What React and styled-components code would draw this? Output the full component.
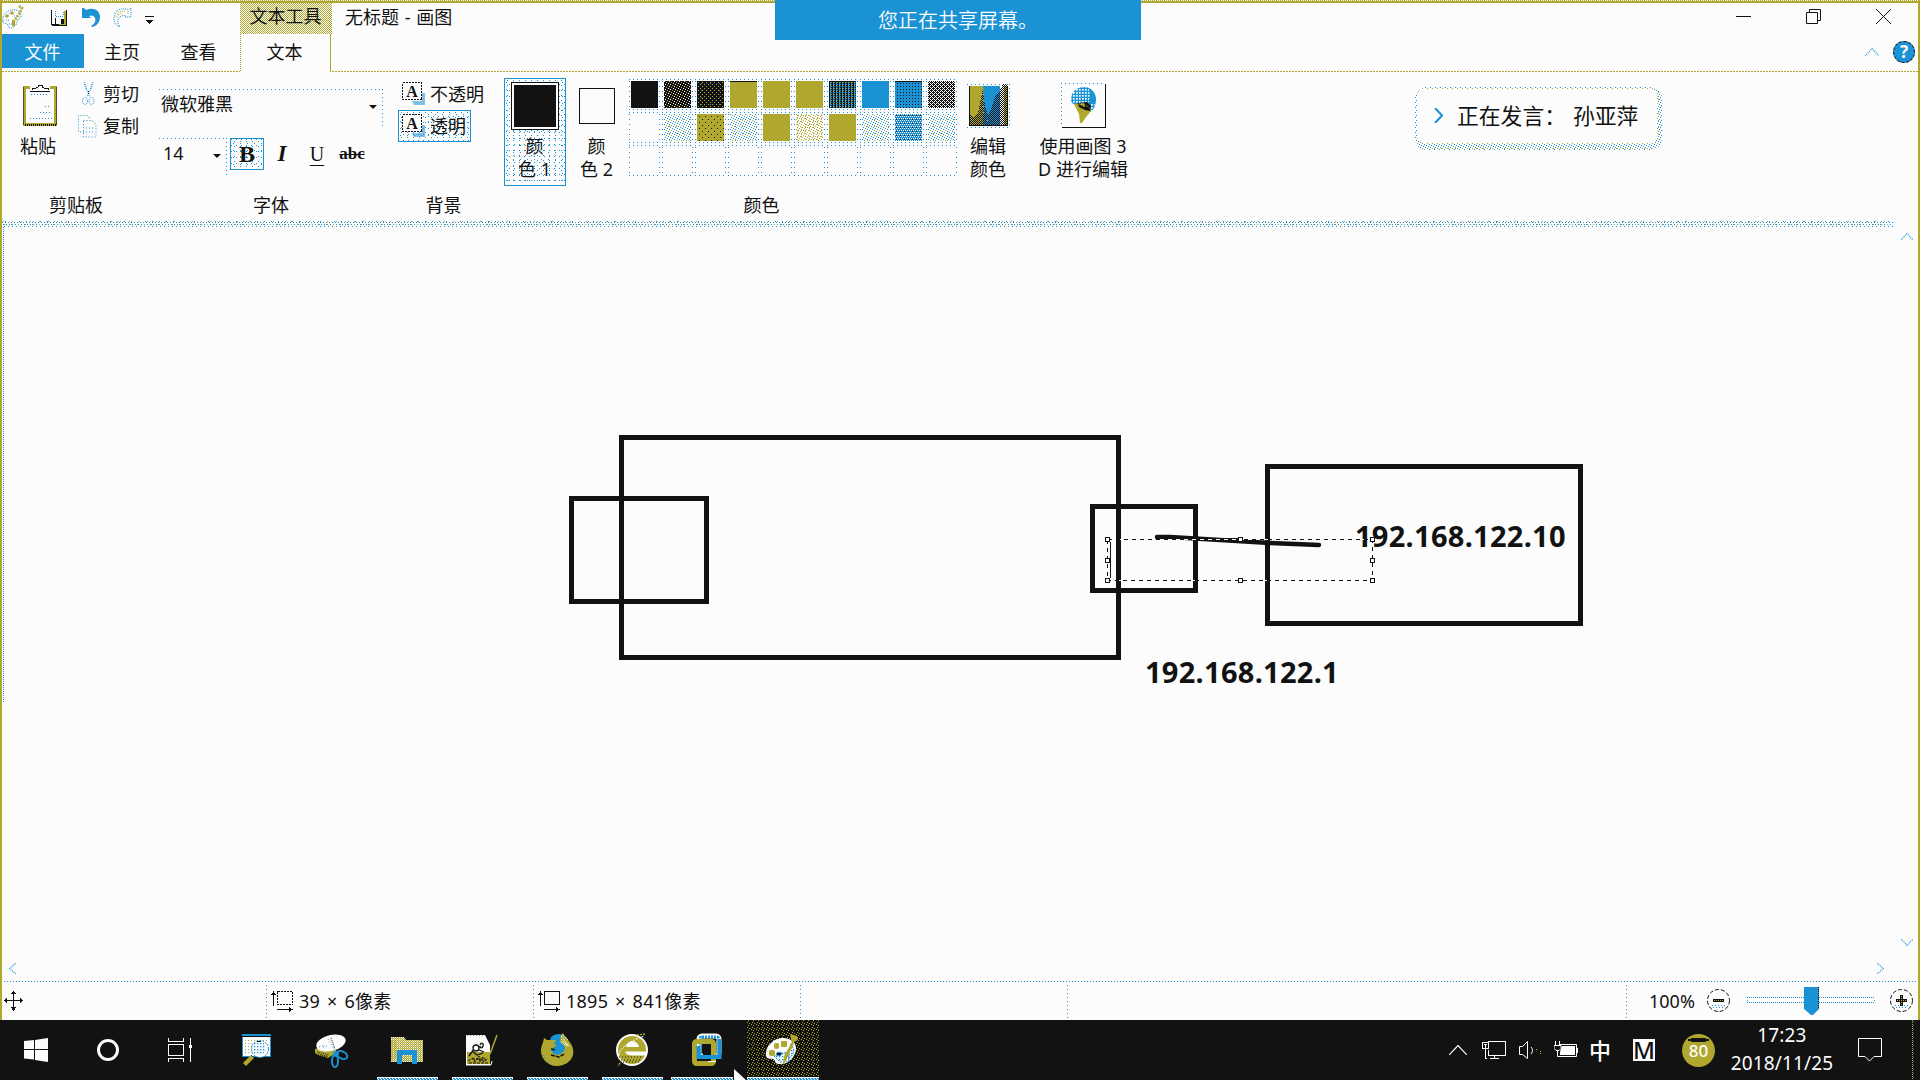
import React from "react";
import styled, { createGlobalStyle, css } from "styled-components";

const INK = "#121212";
const PAPER = "#fcfcfc";
const OLIVE = "#b0a82e";
const BLUE = "#1a92d4";

/* one pixel of colour repeated on a w by h grid */
const dot = (c, x, y, w, h = w) =>
  `conic-gradient(from 270deg at 1px 1px, ${c} 90deg, transparent 0) ${x}px ${y}px / ${w}px ${h}px`;
const checker = (c) => `conic-gradient(${c} 25%, transparent 0 50%, ${c} 0 75%, transparent 0) 0 0 / 2px 2px`;

const mesh = {
  paleBlue: `${dot(BLUE, 0, 0, 5, 6)}, ${dot(BLUE, 3, 2, 6, 5)}, ${dot(BLUE, 2, 4, 7, 7)}`,
  paleMix: `${dot(BLUE, 0, 0, 5, 5)}, ${dot(OLIVE, 2, 1, 5, 5)}, ${dot(BLUE, 4, 2, 5, 5)}, ${dot(BLUE, 1, 3, 5, 5)}, ${dot(BLUE, 3, 4, 5, 5)}, ${dot(OLIVE, 5, 5, 7, 7)}`,
  band: `${dot(BLUE, 0, 1, 3, 6)}, ${dot(OLIVE, 2, 3, 7, 6)}, ${dot(BLUE, 1, 3, 3, 6)}, ${dot(BLUE, 2, 5, 4, 6)}, ${dot(OLIVE, 1, 0, 9, 6)}, ${dot(BLUE, 3, 0, 7, 6)}`,
};

const fills = {
  black: INK,
  gray: `${dot(PAPER, 0, 0, 5, 5)}, ${dot(OLIVE, 2, 1, 5, 5)}, ${dot(PAPER, 4, 2, 5, 5)}, ${dot(PAPER, 1, 3, 5, 5)}, ${dot(OLIVE, 3, 4, 5, 5)}, ${INK}`,
  maroon: `${dot(OLIVE, 1, 1, 4, 4)}, ${dot(OLIVE, 3, 3, 4, 4)}, ${dot(BLUE, 4, 2, 9, 7)}, ${INK}`,
  red: OLIVE,
  orange: OLIVE,
  yellow: OLIVE,
  green: `repeating-linear-gradient(90deg, ${INK} 0 1px, transparent 1px 3px), ${dot(INK, 2, 0, 3, 2)}, ${dot(OLIVE, 1, 1, 3, 3)}, ${BLUE}`,
  cyan: BLUE,
  indigo: `${dot(INK, 2, 2, 3, 3)}, ${BLUE}`,
  purple: `${dot(PAPER, 0, 0, 4, 4)}, ${dot(PAPER, 2, 0, 4, 4)}, ${dot(PAPER, 1, 1, 4, 4)}, ${dot(PAPER, 2, 2, 4, 4)}, ${dot(PAPER, 0, 2, 4, 4)}, ${dot(PAPER, 3, 3, 4, 4)}, ${INK}`,
  white: PAPER,
  pale: `${mesh.paleMix}, ${PAPER}`,
  brown: `${dot(INK, 2, 2, 6, 6)}, ${dot(INK, 5, 5, 6, 6)}, ${OLIVE}`,
  cream: `${dot(OLIVE, 0, 0, 5, 5)}, ${dot(OLIVE, 2, 1, 5, 5)}, ${dot(OLIVE, 4, 2, 5, 5)}, ${dot(OLIVE, 1, 3, 5, 5)}, ${dot(OLIVE, 3, 4, 5, 5)}, ${dot(OLIVE, 1, 1, 4, 3)}, ${PAPER}`,
  slate: `${dot(PAPER, 0, 0, 2, 4)}, ${dot(PAPER, 1, 2, 2, 4)}, ${dot(INK, 1, 1, 4, 4)}, ${BLUE}`,
};

const Global = createGlobalStyle`
  html, body { margin: 0; padding: 0; }
  body { width: 1920px; height: 1080px; overflow: hidden; background: ${INK}; }
  * { box-sizing: border-box; }
  svg { display: block; flex: none; }
`;

const Desktop = styled.div`
  position: relative;
  width: 1920px;
  height: 1080px;
  display: flex;
  flex-direction: column;
  overflow: hidden;
  color: ${INK};
  font: 400 18px/24px "Noto Sans", "Noto Sans CJK SC", sans-serif;
  white-space: nowrap;
`;

const Window = styled.div`
  height: 1020px;
  display: flex;
  flex-direction: column;
  background: ${PAPER};
  border-left: 2px solid ${OLIVE};
  border-right: 2px solid ${OLIVE};
`;

const TopEdge = styled.div`
  height: 3px;
  margin: 0 -2px;
  background: repeating-linear-gradient(90deg, ${OLIVE} 0 1px, transparent 1px 2px) 0 0 / 100% 1px no-repeat,
    linear-gradient(${OLIVE}, ${OLIVE}) 0 1px / 100% 2px no-repeat;
`;

const TitleBar = styled.div`
  height: 31px;
  display: flex;
`;
const QuickAccess = styled.div`
  width: 238px;
  display: flex;
  align-items: flex-start;
`;
const Slot = styled.div`
  margin: ${(p) => p.$m || 0};
  flex: none;
`;
const ContextTitle = styled.div`
  width: 92px;
  height: 32px;
  padding-right: 1px;
  text-align: center;
  line-height: 26px;
  background: ${checker(OLIVE)};
`;
const Title = styled.div`
  flex: 1;
  padding: 2px 0 0 13px;
  word-spacing: 1px;
`;
const WindowButtons = styled.div`
  display: flex;
  padding: 6px 27px 0 0;
  gap: 55px;
`;

const TabRow = styled.div`
  height: 38px;
  display: flex;
  background: repeating-linear-gradient(90deg, ${OLIVE} 0 2px, transparent 2px 3px) 0 37px / 100% 1px no-repeat;
`;
const Tab = styled.div`
  height: 34px;
  line-height: 36px;
  text-align: center;
  width: ${(p) => p.$w}px;
  ${(p) => p.$file && css`background: ${BLUE}; color: ${PAPER}; padding-right: 1px;`}
  ${(p) =>
    p.$active &&
    css`
      height: 38px;
      margin-left: 3px;
      padding-right: 2px;
      background: repeating-linear-gradient(${OLIVE} 0 1px, transparent 1px 2px) 0 0 / 1px 100% no-repeat,
        linear-gradient(${OLIVE}, ${OLIVE}) 90px 0 / 1px 100% no-repeat, ${PAPER};
    `}
`;
const TabTools = styled.div`
  margin-left: auto;
  padding: 7px 3px 0 0;
  display: flex;
  gap: 14px;
`;
const Help = styled.div`
  width: 22px;
  height: 22px;
  border-radius: 50%;
  border: 1px dashed ${INK};
  background: ${BLUE};
  color: ${PAPER};
  font: bold 17px/20px "Noto Sans", sans-serif;
  text-align: center;
`;

const Ribbon = styled.div`
  height: 149px;
  display: flex;
`;
const Group = styled.div`
  width: ${(p) => p.$w}px;
  margin-left: ${(p) => p.$gap || 0}px;
  display: flex;
  flex-direction: column;
`;
const GroupBody = styled.div`
  height: 121px;
  display: flex;
  flex-direction: ${(p) => (p.$column ? "column" : "row")};
`;
const GroupLabel = styled.div`
  text-align: center;
  line-height: 24px;
`;
const Band = styled.div`
  height: 6px;
  width: 1891px;
  flex: none;
  background: ${mesh.band};
`;

const BigButton = styled.div`
  width: ${(p) => p.$w}px;
  padding-top: ${(p) => p.$top}px;
  margin-left: ${(p) => p.$gap || 0}px;
  display: flex;
  flex-direction: column;
  align-items: center;
`;
const BigText = styled.div`
  margin-top: ${(p) => p.$m}px;
  line-height: 23px;
  text-align: center;
`;
const SmallList = styled.div`
  padding: 6px 0 0 12px;
  display: flex;
  flex-direction: column;
`;
const SmallItem = styled.div`
  height: 32px;
  display: flex;
  align-items: center;
`;
const SmallIcon = styled.div`
  width: 25px;
  display: flex;
  justify-content: flex-start;
`;

const Combo = styled.div`
  width: ${(p) => p.$w}px;
  height: 38px;
  display: flex;
  justify-content: space-between;
  padding: ${(p) => p.$pt || 3}px 6px 0 ${(p) => p.$pl}px;
  background: ${dot(BLUE, 0, 0, 4, 80)}, repeating-linear-gradient(${BLUE} 0 1px, transparent 1px 4px) 100% 0 / 1px 100% no-repeat;
`;
const FontGroup = styled.div`
  padding-top: 17px;
  display: flex;
  flex-direction: column;
  gap: 11px;
`;
const FontRow = styled.div`
  display: flex;
`;
const Caret = styled.div`
  width: 0;
  height: 0;
  margin-top: ${(p) => p.$m}px;
  border: 4px solid transparent;
  border-top-color: ${INK};
  border-bottom: 0;
`;
const Style = styled.div`
  width: 34px;
  height: 32px;
  margin-left: ${(p) => p.$gap}px;
  font: ${(p) => p.$font || 'bold 24px/32px "Liberation Serif", serif'};
  text-align: center;
  text-decoration: ${(p) => p.$deco || "none"};
  text-decoration-thickness: 1px;
  text-underline-offset: 4px;
  ${(p) => p.$on && css`background: ${mesh.paleBlue}; border: 1px solid ${BLUE}; line-height: 30px;`}
`;
const Option = styled.div`
  width: 73px;
  height: 32px;
  margin-top: ${(p) => p.$m || 0}px;
  padding-left: 4px;
  display: flex;
  align-items: center;
  gap: 4px;
  ${(p) => p.$on && css`background: ${mesh.paleBlue}; box-shadow: inset 0 0 0 1px ${BLUE};`}
`;

const ColorButton = styled.div`
  width: 62px;
  height: 108px;
  margin-top: 6px;
  padding-right: 1px;
  display: flex;
  flex-direction: column;
  align-items: center;
  ${(p) => p.$on && css`background: ${mesh.paleBlue}; box-shadow: inset 0 0 0 1px ${BLUE};`}
`;
const Chip = styled.div`
  width: ${(p) => p.$s}px;
  height: ${(p) => p.$s}px;
  margin: ${(p) => p.$m};
  background: ${(p) => p.$fill};
  border: 1px solid ${INK};
  box-shadow: inset 0 0 0 2px ${PAPER};
`;
const Palette = styled.div`
  display: grid;
  grid-template-columns: repeat(10, 31px);
  grid-auto-rows: 31px;
  gap: 2px;
  margin: 7px 0 0 12px;
  height: 97px;
`;
const Swatch = styled.div`
  padding: 2px;
  background: ${dot(BLUE, 0, 0, 4, 30)}, ${dot(BLUE, 0, 2, 30, 5)};
  &::before {
    content: "";
    display: block;
    width: 27px;
    height: 27px;
    background: ${(p) => p.$fill || "none"};
    ${(p) => p.$dark && css`box-shadow: inset 0 1px ${INK};`}
  }
`;

const Workspace = styled.div`
  flex: 1;
  display: flex;
  flex-direction: column;
`;
const CanvasRow = styled.div`
  flex: 1;
  display: flex;
`;
const Canvas = styled.div`
  position: relative;
  flex: 1;
  background: repeating-linear-gradient(${BLUE} 0 1px, transparent 1px 2px) 1px 0 / 1px 476px no-repeat;
`;
const VScroll = styled.div`
  width: 22px;
  display: flex;
  flex-direction: column;
  justify-content: space-between;
  padding: 6px 0 6px 5px;
`;
const HScroll = styled.div`
  height: 29px;
  display: flex;
  justify-content: space-between;
  padding: 11px 34px 0 7px;
`;

/* shapes on the drawing canvas, in canvas coordinates */
const Box = styled.div`
  position: absolute;
  left: ${(p) => p.$x}px;
  top: ${(p) => p.$y}px;
  width: ${(p) => p.$w}px;
  height: ${(p) => p.$h}px;
  border: 5px solid ${INK};
`;
const Address = styled.div`
  position: absolute;
  left: ${(p) => p.$x}px;
  top: ${(p) => p.$y}px;
  font: bold 29px/40px "Noto Sans", sans-serif;
  letter-spacing: 0.28px;
`;
const Overlay = styled.svg`
  position: absolute;
  left: 0;
  top: 0;
`;

const StatusBar = styled.div`
  height: 39px;
  display: flex;
  align-items: center;
  background: repeating-linear-gradient(90deg, ${BLUE} 0 1px, transparent 1px 3px) 2px 0 / 100% 1px no-repeat;
`;
const StatusCell = styled.div`
  width: ${(p) => p.$w}px;
  height: 35px;
  margin-top: 4px;
  padding: 0 0 3px ${(p) => p.$pl || 4}px;
  display: flex;
  align-items: center;
  gap: 5px;
  word-spacing: 2px;
  letter-spacing: 0.25px;
  background: repeating-linear-gradient(${BLUE} 0 1px, transparent 1px 4px) 100% 0 / 1px 100% no-repeat;
`;
const Zoom = styled.div`
  flex: 1;
  display: flex;
  align-items: center;
  padding-left: 22px;
`;
const ZoomText = styled.div`
  width: 58px;
`;
const Track = styled.div`
  width: 128px;
  height: 28px;
  margin: 0 15px 0 17px;
  padding-left: 57px;
  background: repeating-linear-gradient(90deg, ${BLUE} 0 1px, transparent 1px 2px) 0 10px / 100% 1px no-repeat,
    repeating-linear-gradient(90deg, ${BLUE} 0 1px, transparent 1px 2px) 0 15px / 100% 1px no-repeat,
    linear-gradient(${BLUE}, ${BLUE}) 0 13px / 1px 1px no-repeat,
    linear-gradient(${BLUE}, ${BLUE}) 127px 13px / 1px 1px no-repeat;
`;

const Taskbar = styled.div`
  height: 60px;
  display: flex;
  background: ${INK};
  color: ${PAPER};
`;
const Task = styled.div`
  width: ${(p) => p.$w}px;
  margin-left: ${(p) => p.$gap || 0}px;
  padding-top: ${(p) => p.$top ?? 13}px;
  padding-left: ${(p) => p.$right || 0}px;
  padding-right: ${(p) => p.$left || 0}px;
  display: flex;
  justify-content: center;
  ${(p) =>
    p.$open &&
    css`
      background: ${dot(PAPER, 0, 58, 3, 60)}, ${dot(PAPER, 1, 59, 3, 60)},
        linear-gradient(${PAPER}, ${PAPER}) 0 57px / 100% 1px no-repeat,
        linear-gradient(${BLUE}, ${BLUE}) 0 58px / 100% 2px no-repeat
        ${p.$active
          ? `, ${dot(OLIVE, 0, 2, 5, 5)}, ${dot(OLIVE, 2, 3, 5, 5)}, ${dot(OLIVE, 4, 4, 5, 5)}, ${dot(OLIVE, 1, 5, 5, 5)}`
          : ""};
    `}
`;
const Tray = styled.div`
  margin-left: auto;
  width: 471px;
  display: flex;
  align-items: flex-start;
`;
const Ime = styled.div`
  width: 20px;
  margin: 17px 0 0 11px;
  font: 500 22px/24px "Noto Sans CJK SC", sans-serif;
  text-align: center;
`;
const Mode = styled.div`
  width: 22px;
  height: 22px;
  margin: 19px 0 0 24px;
  background: ${PAPER};
  color: ${INK};
  font: 500 24px/22px "Noto Sans", sans-serif;
  display: flex;
  justify-content: center;
`;
const Score = styled.div`
  width: 33px;
  height: 33px;
  margin: 14px 0 0 27px;
  border-radius: 50%;
  background: radial-gradient(ellipse 11px 2px at 50% 6px, ${INK} 98%, transparent), ${OLIVE};
  font: 500 17px/34px "Noto Sans", sans-serif;
  text-align: center;
`;
const Clock = styled.div`
  width: 118px;
  margin: 1px 0 0 8px;
  text-align: center;
  line-height: 28px;
  font-size: 19px;
  letter-spacing: 0.15px;
`;
const ShowDesktop = styled.div`
  width: 2px;
  height: 60px;
  margin-left: 30px;
  background: ${dot(OLIVE, 0, 0, 2, 4)}, ${dot(OLIVE, 0, 2, 2, 4)}, ${dot(BLUE, 1, 1, 2, 4)};
`;

const ShareBar = styled.div`
  position: absolute;
  left: 775px;
  top: 0;
  width: 366px;
  height: 40px;
  background: ${BLUE};
  color: ${PAPER};
  font: 350 20px/39px "Noto Sans CJK SC", sans-serif;
  text-align: center;
`;
const Speaking = styled.div`
  position: absolute;
  left: 1415px;
  top: 87px;
  width: 247px;
  height: 63px;
  padding: 2px 5px 7px 2px;
  border-radius: 12px;
  background: ${mesh.paleMix};
`;
const SpeakingCard = styled.div`
  height: 54px;
  border-radius: 7px;
  background: ${PAPER};
  display: flex;
  align-items: center;
  padding: 0 0 2px 17px;
  font: 400 21.8px/30px "Noto Sans CJK SC", sans-serif;
`;
const Pointer = styled.svg`
  position: absolute;
  left: 734px;
  top: 1069px;
`;

const Chevron = ({ d = "up", w = 12, h = 7, color = BLUE, dash = "1 1" }) => {
  const pts = {
    up: `0,${h} ${w / 2},0.5 ${w},${h}`,
    down: `0,0 ${w / 2},${h - 0.5} ${w},0`,
    left: `${w},0 0.5,${h / 2} ${w},${h}`,
    right: `0,0 ${w - 0.5},${h / 2} 0,${h}`,
  };
  return (
    <svg width={w} height={h}>
      <polyline points={pts[d]} fill="none" stroke={color} strokeWidth="1.2" strokeDasharray={dash} />
    </svg>
  );
};

const AppIcon = () => (
  <svg width="22" height="24" viewBox="0 0 22 24">
    <path d="M1 16C0 10 4 6 10 5c5-1 9 2 9 6 0 3-3 3-4 5 0 4-3 7-7 7-2 0-1-3-3-4s-4 0-4-3z" fill={PAPER} stroke={BLUE} strokeDasharray="1 1" />
    <path d="M4 15h3M7 19h4M12 11h3M4 12l4-4" stroke={BLUE} strokeDasharray="1 1" />
    <path d="M17 1l3 2-2 5-6 8" fill="none" stroke={OLIVE} strokeWidth="2.500" strokeDasharray="2 1" />
    <g fill={OLIVE}>
      <circle cx="5" cy="11" r="1.800" /><circle cx="10" cy="8" r="1.800" /><rect x="10" y="15" width="3" height="6" />
    </g>
  </svg>
);
const SaveIcon = () => (
  <svg width="16" height="16" shapeRendering="crispEdges">
    <path d="M0 0h1v15h-1zM15 0h1v16h-1zM1 14h14v2H1zM4 8h1v7H4zM10 9h4v6h-4z" fill={INK} />
    <path d="M4 1v5h8v-5" fill="none" stroke={BLUE} strokeDasharray="1 1" />
    <path d="M13 1h2v14h-2zM8 14h7v1H8z" fill={OLIVE} />
  </svg>
);
const UndoIcon = () => (
  <svg width="18" height="20">
    <path d="M0 0h2l2 2c6-3 14-1 14 7 0 5-3 9-8 10l-1-1c4-2 5-5 4-8-1-3-4-3-6-2l2 2H0z" fill={BLUE} />
  </svg>
);
const RedoIcon = () => (
  <svg width="19" height="20" fill="none" stroke={BLUE} strokeDasharray="1 1">
    <path d="M18 0l-2 2C9-1 1 2 1 10c0 5 2 8 6 9-3-4-3-8 0-10 2-2 4-2 6-1l-1 1h6z" />
    <path d="M5 4l7-1M3 9l2-4M15 3v4M5 7l4-2" stroke={OLIVE} />
  </svg>
);
const PasteIcon = () => (
  <svg width="34" height="43" shapeRendering="crispEdges">
    <path d="M1.500 3.500h31v37h-31z" fill={PAPER} stroke={OLIVE} strokeWidth="3" />
    <path d="M0 3h1v38H0zM33 3h1v38h-1z" fill={INK} opacity=".6" />
    <path d="M2 41h31" stroke={INK} strokeDasharray="1 1" strokeWidth="2" />
    <path d="M7 1h20v6H7z" fill={PAPER} />
    <path d="M7 7.500h20M9 6V4h4M25 6V4h-4M15 3V1h4v2M13 4l2-1M19 3l2 1" fill="none" stroke={INK} />
    <path d="M8 10.500h18M22 22.500h6M17 28.500h12M7 34.500h22" stroke={BLUE} strokeDasharray="1 2" />
  </svg>
);
const CutIcon = () => (
  <svg width="13" height="24" fill="none" stroke={BLUE} strokeDasharray="1 1">
    <path d="M2 0l2 7 4 8M11 0L9 7l-4 8M3 2l2 6M10 2L8 8" />
    <ellipse cx="3" cy="19" rx="2.500" ry="3.500" /><ellipse cx="9.500" cy="19" rx="2.500" ry="3.500" />
    <path d="M6.500 9v4" stroke={INK} />
  </svg>
);
const CopyIcon = () => (
  <svg width="19" height="23" fill="none" stroke={BLUE} strokeDasharray="1 2">
    <path d="M6 17H.5V.5H9l3 3M5.500 5.500H14l4 4V22H5.500zM8 13h7M8 17h7" />
    <path d="M9 .5l4 4M14 5.500l4 4" stroke={OLIVE} />
  </svg>
);
const ModeIcon = () => (
  <svg width="24" height="24">
    <path d="M10 19h13v4H12zM20 11h3v10h-3z" fill={BLUE} opacity=".55" />
    <rect x=".5" y=".5" width="19" height="17" fill={PAPER} stroke={INK} strokeDasharray="2 1" shapeRendering="crispEdges" />
    <text x="10" y="15" textAnchor="middle" fontFamily="Liberation Serif, serif" fontWeight="bold" fontSize="16" fill={INK}>A</text>
  </svg>
);
const EditColors = () => (
  <svg width="43" height="44" shapeRendering="crispEdges">
    <defs>
      <pattern id="inkMesh" width="2" height="2" patternUnits="userSpaceOnUse">
        <rect width="1" height="1" fill={INK} /><rect x="1" y="1" width="1" height="1" fill={INK} />
      </pattern>
    </defs>
    <path d="M0 .5h43M42.500 0v43M0 43.500h43" stroke={BLUE} strokeDasharray="1 3" />
    <rect x="2" y="2" width="14" height="40" fill={OLIVE} />
    <rect x="16" y="2" width="17" height="40" fill={BLUE} />
    <rect x="33" y="2" width="8" height="40" fill={PAPER} />
    <rect x="37" y="2" width="3" height="40" fill={OLIVE} />
    <path d="M2 29l4 5 5-4 3-17 2-8 2 18 3 8 4-8 4-12 4-5 3-6 4 0v42H2z" fill="url(#inkMesh)" />
    <path d="M2 37l6 2 5-4 3-8 3 9 6-5 5-10 5-4 5 6v19H2z" fill="url(#inkMesh)" />
    <path d="M2.500 2v39.500H40V2" fill="none" stroke={INK} />
    <path d="M16.500 4v24l4 9" fill="none" stroke={OLIVE} strokeDasharray="1 2" />
  </svg>
);
const Paint3D = () => (
  <svg width="45" height="45">
    <defs>
      <pattern id="paperMesh" width="3" height="3" patternUnits="userSpaceOnUse"><rect width="1.700" height="1.700" fill={PAPER} /></pattern>
    </defs>
    <g shapeRendering="crispEdges" fill="none">
      <path d="M0 .5h44M.5 0v44" stroke={BLUE} strokeDasharray="1 3" />
      <path d="M44.500 1v43.500H1" stroke={INK} />
    </g>
    <path d="M10 17C10 9 16 4 23 4s12 6 12 12c0 6-2 10-5 13l-15-7c-3-1-5-2-5-5z" fill={BLUE} />
    <path d="M10 17C10 9 16 4 23 4s6 7 5 15l-13 4c-3-1-5-3-5-6z" fill="url(#paperMesh)" />
    <path d="M29 20h5c0 4-2 7-5 10z" fill="url(#paperMesh)" />
    <path d="M13 21h15l2 7-5 6-4 6-2 0-1-9z" fill={OLIVE} />
    <path d="M17 20l9-1 4 4-1 5-5-1-6-3z" fill={INK} />
    <path d="M18 21l5-1 1 4zM25 22l4 4" fill={OLIVE} stroke={OLIVE} strokeDasharray="1 1" />
  </svg>
);
const MoveIcon = () => (
  <svg width="19" height="20" shapeRendering="crispEdges">
    <path d="M0 9.500h19M9.500 0v19" stroke={INK} />
    <path d="M9.500 0l3 3h-6zM9.500 20l3-4h-6zM0 9.500l3-3v6zM19 9.500l-3-3v6z" fill={INK} />
  </svg>
);
const SizeIcon = ({ dashed }) => (
  <svg width="23" height="21" shapeRendering="crispEdges">
    <path d="M2.500 1v14M6 18.500h16" stroke={INK} />
    <path d="M2.500 0l2.500 4H0zM22 18.500L18 16v5z" fill={INK} />
    <rect x="6.500" y=".5" width="15" height="13" fill="none" stroke={INK} strokeDasharray={dashed ? "2 1" : "none"} />
  </svg>
);
const ZoomKnob = ({ plus }) => (
  <svg width="23" height="23">
    <circle cx="11.500" cy="11.500" r="11" fill="none" stroke={INK} strokeDasharray="4 2" />
    <path d="M5 16.500h13M6 18.500h11" stroke={BLUE} strokeDasharray="1 2" />
    <path d={plus ? "M6 11.500h11M11.500 6v11" : "M6 11.500h11"} stroke={INK} strokeWidth="3" />
    <path d={plus ? "M7 11.500h9M11.500 7v9" : "M7 11.500h9"} stroke={OLIVE} strokeDasharray="1 1" />
  </svg>
);

const WinLogo = () => (
  <svg width="24" height="24" fill={PAPER}>
    <path d="M0 3l10-1v9H0zM11 2l13-2v11H11zM0 12h10v9.500L0 20.500zM11 12h13v12l-13-2z" />
  </svg>
);
const Ring = () => (
  <svg width="24" height="24"><circle cx="12" cy="12" r="9.500" fill="none" stroke={PAPER} strokeWidth="3" /></svg>
);
const TaskView = () => (
  <svg width="25" height="24" fill="none" stroke={PAPER} shapeRendering="crispEdges">
    <path d="M.5 0v3.500h15V0M.5 6.500h15v11H.5zM.5 24v-3.500h15V24M22.500 0v24" />
    <rect x="21" y="7" width="3" height="3" fill={PAPER} stroke="none" />
  </svg>
);
const Magnify = () => (
  <svg width="31" height="33">
    <defs>
      <pattern id="oliveDots" width="3" height="3" patternUnits="userSpaceOnUse"><rect width="1" height="1" fill={OLIVE} /></pattern>
      <pattern id="blueDots" width="3" height="3" patternUnits="userSpaceOnUse"><rect width="1.300" height="1.300" fill={BLUE} /></pattern>
    </defs>
    <rect x=".5" y=".5" width="28" height="22" fill={PAPER} stroke={BLUE} />
    <rect width="29" height="2" fill={BLUE} />
    <path d="M0 2.500h29" stroke={INK} />
    <rect x="3" y="5" width="22" height="15" fill="url(#oliveDots)" />
    <circle cx="18" cy="15" r="8.500" fill={PAPER} stroke={BLUE} strokeDasharray="2 1" />
    <circle cx="17" cy="14" r="7" fill="url(#blueDots)" />
    <path d="M15 7.500h4" stroke={INK} />
    <path d="M9 21l3 3-8 8-3-3z" fill={OLIVE} />
    <path d="M9 21l3 3" stroke={INK} strokeDasharray="1 1" />
  </svg>
);
const Snip = () => (
  <svg width="34" height="34">
    <path d="M0 15v4l3 2 10 3 8-5V8z" fill={OLIVE} />
    <path d="M2 18l12 3M3 20l10 3M5 22h8" stroke={INK} strokeDasharray="1 1" />
    <ellipse cx="16" cy="9" rx="15" ry="8" transform="rotate(-14 16 9)" fill={PAPER} />
    <path d="M4 13l6-2M8 13l5-1M13 5l7 12" stroke={BLUE} strokeDasharray="1 2" />
    <path d="M16 4l4 11" stroke={INK} strokeDasharray="1 1" />
    <g fill="none" stroke={BLUE} strokeWidth="2">
      <ellipse cx="27" cy="21" rx="5.500" ry="3.500" transform="rotate(25 27 21)" />
      <ellipse cx="20" cy="27" rx="3" ry="6" />
    </g>
    <circle cx="21" cy="20" r="3" fill={BLUE} />
  </svg>
);
const Folder = () => (
  <svg width="33" height="27">
    <defs>
      <pattern id="cream" width="2" height="2" patternUnits="userSpaceOnUse"><rect width="2" height="2" fill={OLIVE} /><rect width="1" height="1" fill={PAPER} /><rect x="1" y="1" width="1" height="1" fill={PAPER} opacity=".5" /></pattern>
    </defs>
    <path d="M0 0h13l2 3h17v22H0z" fill="url(#cream)" />
    <path d="M1 3v20M4 3v18" stroke={OLIVE} />
    <path d="M6 13h20v14h-5v-8H11v8H6z" fill={BLUE} />
    <rect x="11" y="18" width="10" height="7" fill="url(#cream)" />
  </svg>
);
const Notepad = () => (
  <svg width="32" height="33">
    <path d="M0 1h19l5 10v20H0z" fill={PAPER} />
    <path d="M1 1h16" stroke={INK} strokeDasharray="1 2" />
    <rect x="1" y="18" width="23" height="12" fill={OLIVE} />
    <g fill="none" stroke={INK}>
      <path d="M7 14c0-4 6-4 6 0s-6 4-6 0M14 11c1-3 4-2 3 1s-3 2-3 0M3 22l5-7M6 17l5 4 6-2M13 16l5 2" strokeWidth="1.300" />
      <path d="M2 27l5-3 2 4 4-6 1 6 3-5v5l5-3M3 29h20M6 25h14" strokeDasharray="3 1" />
    </g>
    <path d="M31 1L24 20" stroke={OLIVE} strokeWidth="1.500" />
    <path d="M0 31h25l1-4" fill="none" stroke={PAPER} />
  </svg>
);
const Firefox = () => (
  <svg width="33" height="33">
    <path d="M10 4c5-4 12-4 16 1l2 15-13 5-8-9z" fill={BLUE} />
    <path d="M3 5l3 2h9l-2 4 3 1-4 3c-2 1-2 3 0 5 3 3 8 2 11-2 2-3 0-6-2-8l-1-5 2-4 5 6c5 5 6 11 5 15-2 7-9 11-16 11C6 33 0 25 0 18c0-5 2-7 3-13z" fill={OLIVE} />
    <path d="M19 9l1-7 2-2 2 5 3 2 1 6-4-1z" fill={OLIVE} />
    <path d="M20 3l8 10M20 6l7 7M22 2l5 5M20 9l6 4" stroke={PAPER} strokeDasharray="2 1" />
    <path d="M10 16l5 1M10 22l8 2 5-3" fill="none" stroke={INK} strokeWidth="1.500" strokeDasharray="4 1" />
    <path d="M2 22l3 5 5 4" fill="none" stroke={BLUE} strokeDasharray="1 2" />
  </svg>
);
const Browser = () => (
  <svg width="34" height="34">
    <circle cx="17" cy="17" r="15" fill={OLIVE} stroke={PAPER} strokeWidth="2" />
    <path d="M11 14c1-7 11-8 13 0zM10 18.500h21v4H17c-3 0-6-1-7-4z" fill={PAPER} />
    <path d="M4 22C4 15 16 8 29 3" fill="none" stroke={PAPER} strokeDasharray="2 1" />
    <path d="M4 24h22M6 27h20M8 29h17" stroke={INK} strokeDasharray="1 2" />
    <path d="M22 2l8-1M5 30l-2 3" stroke={OLIVE} strokeWidth="1.500" strokeDasharray="2 1" />
  </svg>
);
const Vm = () => (
  <svg width="31" height="34">
    <rect x="7" y="3" width="20" height="20" rx="3" fill="none" stroke={PAPER} strokeWidth="5" />
    <rect x="8" y="4" width="19" height="19" rx="2" fill="none" stroke={BLUE} strokeWidth="3" strokeDasharray="2 1" />
    <rect x="2.500" y="8.500" width="19" height="22" rx="2" fill="none" stroke={OLIVE} strokeWidth="5" />
    <path d="M6.500 13v11h21V6" fill="none" stroke={BLUE} strokeWidth="4" />
    <rect x="11" y="13" width="8" height="9" fill={INK} />
    <path d="M16 28.500h8" stroke={PAPER} />
  </svg>
);
const PaintTask = () => (
  <svg width="36" height="36">
    <path d="M2 24C1 15 9 6 19 6c8 0 14 5 13 12-1 8-9 15-17 14-5 0-3-4-6-5s-6 1-7-3z" fill={PAPER} />
    <path d="M17 21h8v9h-9l-6-6zM26 12c5 3 5 11-2 15" fill="url(#blueDots)" stroke={BLUE} strokeDasharray="2 1" />
    <g fill={OLIVE}>
      <path d="M26 2l7 2 1 4-6 3-1-4zM28 10l2 1-8 18-3 3 1-8z" />
      <rect x="17" y="9" width="6" height="6" rx="1" /><rect x="10" y="11" width="5" height="6" rx="2" /><rect x="5" y="18" width="6" height="6" rx="2" />
    </g>
    <ellipse cx="15" cy="22" rx="2.500" ry="1.800" fill={INK} stroke={BLUE} />
  </svg>
);

const ROWS = [
  ["black", "gray", "maroon", "red", "orange", "yellow", "green", "cyan", "indigo", "purple"],
  ["white", "pale", "brown", "pale", "orange", "cream", "yellow", "pale", "slate", "pale"],
  Array(10).fill(null),
];
const DARK = ["maroon", "red", "green", "indigo"];

const Handle = ({ x, y }) => <rect x={x - 2} y={y - 2} width="4" height="4" fill={PAPER} stroke={INK} />;

export default function App() {
  return (
    <Desktop>
      <Global />
      <Window>
        <TopEdge />
        <TitleBar>
          <QuickAccess>
            <Slot $m="2px 0 0 0"><AppIcon /></Slot>
            <Slot $m="7px 0 0 27px"><SaveIcon /></Slot>
            <Slot $m="5px 0 0 15px"><UndoIcon /></Slot>
            <Slot $m="5px 0 0 13px"><RedoIcon /></Slot>
            <Slot $m="13px 0 0 13px">
              <svg width="9" height="8" fill={INK} shapeRendering="crispEdges"><path d="M0 0h9v1H0zM0 4h9L4.500 8z" /></svg>
            </Slot>
          </QuickAccess>
          <ContextTitle>文本工具</ContextTitle>
          <Title>无标题 - 画图</Title>
          <WindowButtons>
            <svg width="15" height="15"><path d="M0 7.500h15" stroke={INK} /></svg>
            <svg width="15" height="15" fill="none" stroke={INK}><path d="M.5 3.500h11v11H.5zM3.500 3V.5h11v11H12" /></svg>
            <svg width="15" height="15"><path d="M0 0l15 15M15 0L0 15" stroke={INK} /></svg>
          </WindowButtons>
        </TitleBar>
        <TabRow>
          <Tab $w={82} $file>文件</Tab>
          <Tab $w={76}>主页</Tab>
          <Tab $w={77}>查看</Tab>
          <Tab $w={91} $active>文本</Tab>
          <TabTools>
            <Slot $m="7px 0 0"><Chevron w={14} h={8} /></Slot>
            <Help>?</Help>
          </TabTools>
        </TabRow>

        <Ribbon>
          <Group $w={148}>
            <GroupBody>
              <BigButton $w={56} $top={12} $gap={8}>
                <Slot $m="0 0 0 3px"><PasteIcon /></Slot>
                <BigText $m={8}>粘贴</BigText>
              </BigButton>
              <SmallList>
                <SmallItem><SmallIcon><Slot $m="0 0 0 4px"><CutIcon /></Slot></SmallIcon>剪切</SmallItem>
                <SmallItem><SmallIcon><CopyIcon /></SmallIcon>复制</SmallItem>
              </SmallList>
            </GroupBody>
            <GroupLabel>剪贴板</GroupLabel>
          </Group>
          <Group $w={224} $gap={9}>
            <GroupBody>
              <FontGroup>
                <Combo $w={224} $pl={2}>微软雅黑<Caret $m={13} /></Combo>
                <FontRow>
                  <Combo $w={68} $pl={4}>14<Caret $m={13} /></Combo>
                  <Style $gap={3} $on>B</Style>
                  <Style $gap={1} $font={'italic bold 23px/32px "Liberation Serif", serif'}>I</Style>
                  <Style $gap={1} $font={'20px/32px "Liberation Serif", serif'} $deco="underline">U</Style>
                  <Style $gap={1} $font={'bold 17px/32px "Liberation Serif", serif'} $deco="line-through">abc</Style>
                </FontRow>
              </FontGroup>
            </GroupBody>
            <GroupLabel>字体</GroupLabel>
          </Group>
          <Group $w={91} $gap={15}>
            <GroupBody $column>
              <Option $m={6}><ModeIcon />不透明</Option>
              <Option $on><ModeIcon />透明</Option>
            </GroupBody>
            <GroupLabel>背景</GroupLabel>
          </Group>
          <Group $w={515} $gap={15}>
            <GroupBody>
              <ColorButton $on>
                <Chip $s={48} $m="4px 0 5px" $fill={INK} />
                <BigText $m={0}>颜<br />色 1</BigText>
              </ColorButton>
              <ColorButton>
                <Chip $s={36} $m="10px 0 11px" $fill={PAPER} />
                <BigText $m={0}>颜<br />色 2</BigText>
              </ColorButton>
              <Slot $m="0 0 0 -11px">
                <Palette>
                  {ROWS.flatMap((row, r) =>
                    row.map((name, c) => <Swatch key={`${r}-${c}`} $fill={name && fills[name]} $dark={DARK.includes(name)} />)
                  )}
                </Palette>
              </Slot>
              <BigButton $w={46} $top={12} $gap={8}>
                <EditColors />
                <BigText $m={7}>编辑<br />颜色</BigText>
              </BigButton>
            </GroupBody>
            <GroupLabel>颜色</GroupLabel>
          </Group>
          <Group $w={90} $gap={19}>
            <BigButton $w={90} $top={11}>
              <Paint3D />
              <BigText $m={7}>使用画图 3<br />D 进行编辑</BigText>
            </BigButton>
          </Group>
        </Ribbon>
        <Band />

        <Workspace>
          <CanvasRow>
            <Canvas>
              <Box $x={617} $y={208} $w={502} $h={225} />
              <Box $x={567} $y={269} $w={140} $h={108} />
              <Box $x={1088} $y={277} $w={108} $h={89} />
              <Box $x={1263} $y={237} $w={318} $h={162} />
              <Address $x={1353} $y={289}>192.168.122.10</Address>
              <Address $x={1143} $y={425}>192.168.122.1</Address>
              <Overlay width="1890" height="724">
                <path d="M1155 310l13 0 50 3 50 3 49 2" fill="none" stroke={INK} strokeWidth="4.500" strokeLinecap="round" />
                <g shapeRendering="crispEdges">
                  <rect x="1105.500" y="312.500" width="265" height="41" fill="none" stroke={PAPER} />
                  <rect x="1105.500" y="312.500" width="265" height="41" fill="none" stroke={INK} strokeDasharray="4 4" />
                  <path d="M1157 311.500h80" stroke={INK} />
                  <path d="M1108.500 315v36" stroke={INK} />
                  {[1105.5, 1238.5, 1370.5].flatMap((x) =>
                    [312.5, 333.5, 353.5].filter((y) => x !== 1238.5 || y !== 333.5).map((y) => <Handle key={`${x}-${y}`} x={x} y={y} />)
                  )}
                </g>
              </Overlay>
            </Canvas>
            <VScroll>
              <Chevron />
              <Chevron d="down" />
            </VScroll>
          </CanvasRow>
          <HScroll>
            <Chevron d="left" w={7} h={11} />
            <Chevron d="right" w={7} h={11} />
          </HScroll>
        </Workspace>
        <StatusBar>
          <StatusCell $w={265} $pl={2}><MoveIcon /></StatusCell>
          <StatusCell $w={267}><SizeIcon dashed />39 × 6像素</StatusCell>
          <StatusCell $w={267}><SizeIcon />1895 × 841像素</StatusCell>
          <StatusCell $w={267} />
          <StatusCell $w={559} />
          <Zoom>
            <ZoomText>100%</ZoomText>
            <ZoomKnob />
            <Track>
              <svg width="15" height="28"><path d="M0 0h15v22l-6 6H7l-7-6z" fill={BLUE} /><path d="M14.500 0v22" stroke={INK} strokeDasharray="1 1" /></svg>
            </Track>
            <ZoomKnob plus />
          </Zoom>
        </StatusBar>
      </Window>

      <Taskbar>
        <Task $w={72} $top={18}><WinLogo /></Task>
        <Task $w={72} $top={18}><Ring /></Task>
        <Task $w={72} $top={18}><TaskView /></Task>
        <Task $w={76} $gap={3} $top={14}><Magnify /></Task>
        <Task $w={74} $top={14}><Snip /></Task>
        <Task $w={61} $gap={8} $top={17} $open><Folder /></Task>
        <Task $w={61} $gap={14} $top={14} $left={2} $open><Notepad /></Task>
        <Task $w={61} $gap={14} $open><Firefox /></Task>
        <Task $w={61} $gap={14} $left={1} $open><Browser /></Task>
        <Task $w={62} $gap={8} $right={10} $open><Vm /></Task>
        <Task $w={72} $gap={14} $top={12} $left={2} $open $active><PaintTask /></Task>
        <Tray>
          <Slot $m="25px 0 0 0"><Chevron w={18} h={10} color={PAPER} dash="none" /></Slot>
          <Slot $m="21px 0 0 15px">
            <svg width="24" height="19" fill="none" stroke={PAPER} shapeRendering="crispEdges">
              <path d="M6 .5h17.500v14H6.500v-6M12.500 15v3M8 17.500h9M.5 1.500h6v6h-6zM3.500 3v4M2 3.500h3M3.500 8v9.500H5" />
            </svg>
          </Slot>
          <Slot $m="21px 0 0 13px">
            <svg width="23" height="19" fill="none" stroke={PAPER}>
              <path d="M.5 5.500h3l5-5v17l-5-4h-3zM12 6c2 2 2 5 0 7" /><path d="M17.500 8v2M21.500 10v3" stroke={OLIVE} strokeDasharray="1 1" />
            </svg>
          </Slot>
          <Slot $m="21px 0 0 12px">
            <svg width="24" height="17">
              <path d="M1.500 0v4M5.500 0v4M0 4.500h7v3l-2 2H2l-2-2zM3.500 10v5.500H6M5 3.500h17.500v12H5M23.500 7v5" fill="none" stroke={PAPER} />
              <path d="M8 5h13v9H6v-3z" fill={PAPER} />
            </svg>
          </Slot>
          <Ime>中</Ime>
          <Mode>M</Mode>
          <Score>80</Score>
          <Clock>17:23<br />2018/11/25</Clock>
          <Slot $m="18px 0 0 17px">
            <svg width="24" height="25"><path d="M.5.5h23v18H16l-4.500 4.500L7 18.500H.5z" fill="none" stroke={PAPER} /></svg>
          </Slot>
          <ShowDesktop />
        </Tray>
      </Taskbar>

      <ShareBar>您正在共享屏幕。</ShareBar>
      <Speaking>
        <SpeakingCard>
          <svg width="9" height="15"><path d="M1 0l7 7.500L1 15" fill="none" stroke={BLUE} strokeWidth="2" /></svg>
          <Slot $m="0 0 0 14px">正在发言：</Slot>
          <Slot $m="0 0 0 7px">孙亚萍</Slot>
        </SpeakingCard>
      </Speaking>
      <Pointer width="12" height="11"><path d="M0 0v11h12z" fill={PAPER} /></Pointer>
    </Desktop>
  );
}
